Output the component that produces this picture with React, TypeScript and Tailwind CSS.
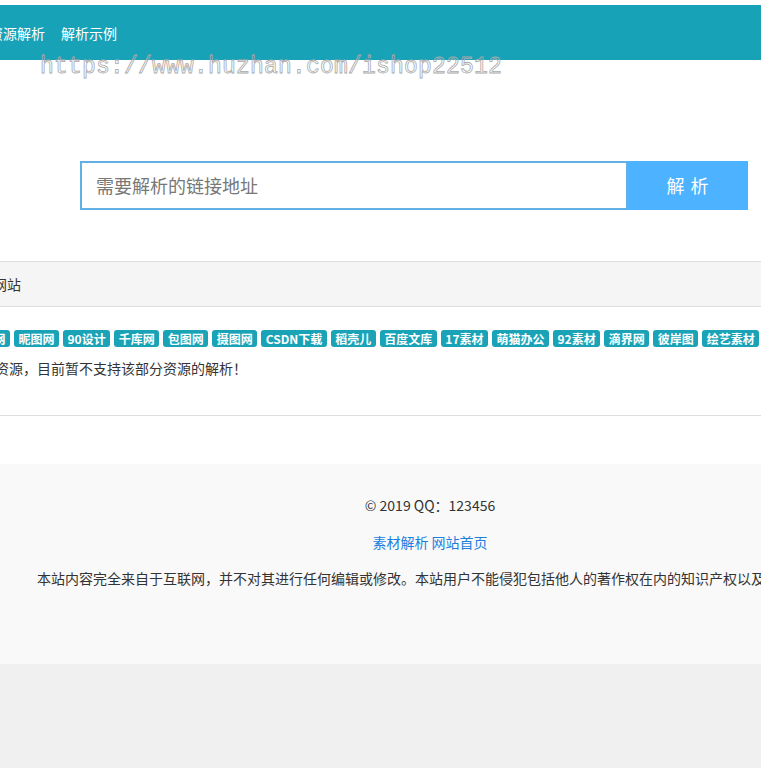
import React from "react";

const tags = [
  "千图网",
  "昵图网",
  "90设计",
  "千库网",
  "包图网",
  "摄图网",
  "CSDN下载",
  "稻壳儿",
  "百度文库",
  "17素材",
  "萌猫办公",
  "92素材",
  "滴界网",
  "彼岸图",
  "绘艺素材",
  "觅元素",
];

export default function App() {
  return (
    <div
      className="relative w-[761px] min-h-[768px] overflow-hidden bg-[#f0f0f0] text-[14px] text-[#333]"
      style={{ fontFamily: '"Noto Sans CJK SC", "Microsoft YaHei", sans-serif' }}
    >
      <div className="bg-white pt-[5px]">
        {/* header */}
        <div className="flex h-[55px] items-center bg-[#18a2b8] pt-[2px] text-white">
          <div className="-ml-[11px] flex gap-[16px] whitespace-nowrap">
            <span>资源解析</span>
            <span>解析示例</span>
          </div>
        </div>

        {/* search */}
        <div className="flex pl-[80px] pt-[101px]">
          <div className="flex h-[49px] w-[548px] shrink-0 items-center border-2 border-[#62b0e6] bg-white pl-[14px] text-[18px] text-[#777]">
            需要解析的链接地址
          </div>
          <button className="h-[49px] w-[120px] shrink-0 bg-[#4db2ff] text-[18px] tracking-[1px] text-white">
            解 析
          </button>
        </div>

        {/* panel */}
        <div className="mt-[51px] border-y border-[#ddd]">
          <div className="flex h-[45px] items-center border-b border-[#ddd] bg-[#f5f5f5] whitespace-nowrap">
            <span className="-ml-[7px]">网站</span>
          </div>
          <div className="h-[108px] pt-[23px]">
            <div className="-ml-[35px] flex gap-[4px] whitespace-nowrap">
              {tags.map((t) => (
                <span
                  key={t}
                  className="flex h-[17px] items-center rounded-[3px] bg-[#1aa3b7] px-[4.5px] text-[12px] font-bold leading-none text-white"
                >
                  {t}
                </span>
              ))}
            </div>
            <div className="-ml-[33px] mt-[11px] whitespace-nowrap leading-[20px]">
              部分资源，目前暂不支持该部分资源的解析！
            </div>
          </div>
        </div>
        <div className="h-[48px]" />
      </div>

      {/* footer */}
      <div className="h-[200px] bg-[#f9f9f9] pt-[31px]">
        <div className="w-[860px] text-center leading-[20px]">© 2019 QQ：123456</div>
        <div className="mt-[17px] w-[860px] text-center leading-[20px] text-[#1a7fe0]">
          素材解析 网站首页
        </div>
        <div className="mt-[16px] whitespace-nowrap pl-[37px] leading-[20px]">
          本站内容完全来自于互联网，并不对其进行任何编辑或修改。本站用户不能侵犯包括他人的著作权在内的知识产权以及其他权利。
        </div>
      </div>

      {/* watermark */}
      <div
        className="pointer-events-none absolute left-[40px] top-[50px] whitespace-nowrap text-[23px] tracking-[0.2px] text-transparent [-webkit-text-stroke:0.8px_#aaaaaa]"
        style={{ fontFamily: '"Liberation Mono", monospace' }}
      >
        https://www.huzhan.com/ishop22512
      </div>
    </div>
  );
}
